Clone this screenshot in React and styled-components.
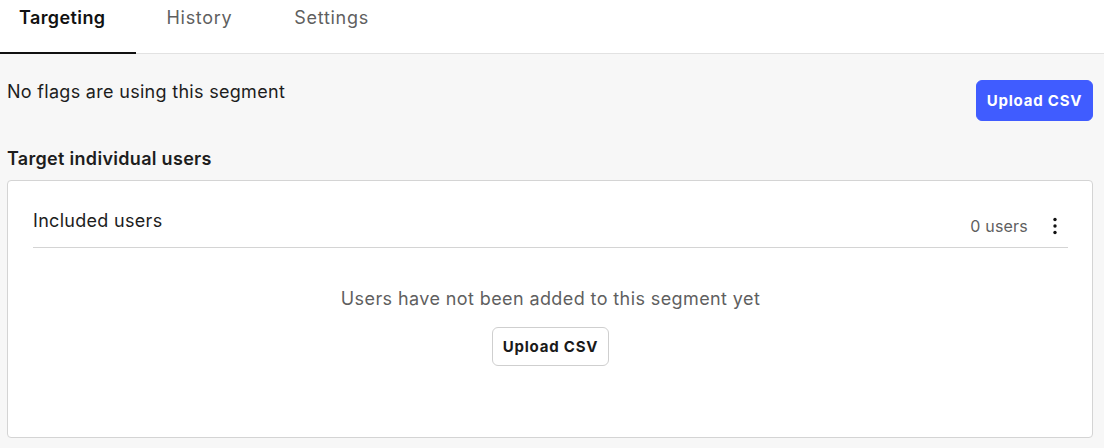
import React from 'react';
import styled, { createGlobalStyle } from 'styled-components';

const GlobalStyle = createGlobalStyle`
  html, body {
    margin: 0;
    padding: 0;
    background: #f7f7f7;
    font-family: Inter, "Noto Sans", sans-serif;
    color: #1a1a1a;
  }
  * { box-sizing: border-box; }
`;

const Page = styled.div`
  width: 1104px;
  height: 448px;
  background: #f7f7f7;
  overflow: hidden;
`;

const TabBar = styled.nav`
  display: flex;
  height: 54px;
  background: #fff;
  border-bottom: 1px solid #e2e2e2;
`;

const Tab = styled.div`
  padding: 6px ${(p) => (p.first ? 30 : 31)}px 0 ${(p) => (p.first ? 19 : 31)}px;
  font-size: 18px;
  line-height: 24px;
  letter-spacing: ${(p) => (p.active ? 0.4 : 0.7)}px;
  font-weight: ${(p) => (p.active ? 600 : 400)};
  color: ${(p) => (p.active ? '#111' : '#5f5f5f')};
  border-bottom: 2px solid ${(p) => (p.active ? '#111' : 'transparent')};
  margin-bottom: -1px;
`;

const Content = styled.main`
  padding: 26px 11px 0 7px;
`;

const TopRow = styled.div`
  display: flex;
  justify-content: space-between;
  align-items: flex-start;
`;

const Note = styled.p`
  margin: 0;
  font-size: 18px;
  line-height: 24px;
  letter-spacing: 0.3px;
  color: #1d1d1d;
`;

const Button = styled.button`
  font-family: Inter, "Noto Sans", sans-serif;
  font-size: 15px;
  font-weight: 700;
  letter-spacing: 0.8px;
  border-radius: 6px;
  cursor: pointer;
  width: 117px;
  height: ${(p) => (p.primary ? 41 : 39)}px;
  background: ${(p) => (p.primary ? '#405cff' : '#fff')};
  color: ${(p) => (p.primary ? '#fff' : '#1a1a1a')};
  border: 1px solid ${(p) => (p.primary ? '#405cff' : '#cfcfcf')};
`;

const SectionTitle = styled.h2`
  margin: 26px 0 0;
  font-size: 18px;
  line-height: 24px;
  letter-spacing: 0.3px;
  font-weight: 600;
  color: #1d1d1d;
`;

const Card = styled.section`
  margin-top: 9px;
  height: 258px;
  background: #fff;
  border: 1px solid #d4d4d4;
  border-radius: 4px;
  padding: 25px 24px 0 25px;
`;

const CardHeader = styled.div`
  display: flex;
  align-items: center;
  justify-content: space-between;
  height: 42px;
  padding-bottom: 2px;
  border-bottom: 1px solid #d4d4d4;
`;

const CardTitle = styled.h3`
  margin: 0 0 9px;
  font-size: 18px;
  line-height: 24px;
  letter-spacing: 0.3px;
  font-weight: 400;
  color: #1d1d1d;
`;

const HeaderRight = styled.div`
  display: flex;
  align-items: center;
  gap: 16px;
  padding-right: 2px;
`;

const Count = styled.span`
  font-size: 16px;
  letter-spacing: 0.2px;
  color: #5f5f5f;
`;

const Kebab = styled.button`
  display: flex;
  align-items: center;
  justify-content: center;
  width: 22px;
  height: 22px;
  padding: 0;
  border: none;
  background: none;
`;

const Empty = styled.div`
  display: flex;
  flex-direction: column;
  align-items: center;
  padding-top: 39px;
  gap: 16px;
`;

const EmptyText = styled.p`
  margin: 0;
  font-size: 18px;
  line-height: 24px;
  letter-spacing: 0.4px;
  color: #5f5f5f;
`;

export default function App() {
  return (
    <Page>
      <GlobalStyle />
      <TabBar>
        <Tab active first>Targeting</Tab>
        <Tab>History</Tab>
        <Tab>Settings</Tab>
      </TabBar>
      <Content>
        <TopRow>
          <Note>No flags are using this segment</Note>
          <Button primary>Upload CSV</Button>
        </TopRow>
        <SectionTitle>Target individual users</SectionTitle>
        <Card>
          <CardHeader>
            <CardTitle>Included users</CardTitle>
            <HeaderRight>
              <Count>0 users</Count>
              <Kebab aria-label="More">
                <svg width="4" height="18" viewBox="0 0 4 18">
                  <circle cx="2" cy="2.5" r="1.7" fill="#111" />
                  <circle cx="2" cy="9" r="1.7" fill="#111" />
                  <circle cx="2" cy="15.5" r="1.7" fill="#111" />
                </svg>
              </Kebab>
            </HeaderRight>
          </CardHeader>
          <Empty>
            <EmptyText>Users have not been added to this segment yet</EmptyText>
            <Button>Upload CSV</Button>
          </Empty>
        </Card>
      </Content>
    </Page>
  );
}
